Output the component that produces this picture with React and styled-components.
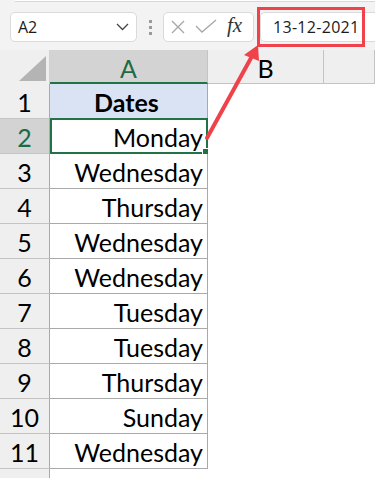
import React from 'react';
import styled, { createGlobalStyle } from 'styled-components';

const GlobalStyle = createGlobalStyle`
  html, body {
    margin: 0;
    padding: 0;
    background: #ffffff;
  }
  body {
    width: 375px;
    height: 478px;
    overflow: hidden;
    font-family: 'Open Sans', 'Noto Sans', sans-serif;
  }
`;

const rows = [
  'Monday',
  'Wednesday',
  'Thursday',
  'Wednesday',
  'Wednesday',
  'Tuesday',
  'Tuesday',
  'Thursday',
  'Sunday',
  'Wednesday',
];

const Page = styled.div`
  position: relative;
  width: 375px;
  height: 478px;
  overflow: hidden;
  background: #ffffff;
`;

const Toolbar = styled.div`
  height: 50px;
  background: #f3f3f3;
  box-sizing: border-box;
  padding: 12px 0 8px 10px;
  display: flex;
  align-items: stretch;
`;

const RibbonEdge = styled.div`
  position: absolute;
  top: 0;
  left: 15px;
  right: 0;
  height: 1px;
  border-bottom: 1px solid #d9d9d9;
  background: #ffffff;
`;

const NameBox = styled.div`
  width: 127px;
  box-sizing: border-box;
  background: #ffffff;
  border: 1px solid #dadada;
  border-radius: 5px;
  display: flex;
  align-items: center;
  justify-content: space-between;
  padding: 0 7px 0 7px;
  font-size: 16px;
  color: #1b1b1b;
`;

const Dots = styled.div`
  width: 26px;
  display: flex;
  flex-direction: column;
  align-items: center;
  justify-content: center;
  gap: 3px;

  span {
    width: 3px;
    height: 3px;
    background: #9a9a9a;
  }
`;

const FormulaButtons = styled.div`
  width: 91px;
  box-sizing: border-box;
  background: #ffffff;
  border: 1px solid #dadada;
  border-radius: 5px;
  display: flex;
  align-items: center;
  padding: 0 5px 0 6px;
  gap: 9px;
  margin-right: 6px;
`;

const Fx = styled.span`
  font-family: 'Liberation Serif', serif;
  font-style: italic;
  font-size: 21px;
  color: #333333;
  margin-left: 1px;
  margin-top: -3px;
`;

const FormulaInput = styled.div`
  flex: 1;
  background: #ffffff;
  border: 1px solid #dadada;
  border-right: none;
  border-radius: 5px 0 0 5px;
  display: flex;
  align-items: center;
  padding-left: 12px;
  font-size: 16px;
  color: #1b1b1b;
  letter-spacing: 0.3px;
`;

const HeaderRow = styled.div`
  display: flex;
  height: 34px;
  background: #efefef;
`;

const Corner = styled.div`
  width: 50px;
  box-sizing: border-box;
  border-right: 1px solid #d0d0d0;
  display: flex;
  align-items: flex-end;
  justify-content: flex-end;
  padding: 0 3px 3px 0;
`;

const ColHead = styled.div`
  width: ${p => (p.$w ? `${p.$w}px` : 'auto')};
  flex: ${p => (p.$w ? 'none' : 1)};
  box-sizing: border-box;
  background: ${p => (p.$active ? '#d3d3d3' : '#efefef')};
  border-right: 1px solid #c4c4c4;
  border-bottom: ${p => (p.$active ? '2px solid #217346' : '1px solid #c4c4c4')};
  display: flex;
  align-items: center;
  justify-content: center;
  font-family: 'Lato', sans-serif;
  font-size: 25px;
  color: ${p => (p.$active ? '#1e6b41' : '#000000')};
  padding-top: 3px;
`;

const Row = styled.div`
  display: flex;
  height: 35px;
`;

const RowHead = styled.div`
  width: 50px;
  box-sizing: border-box;
  background: ${p => (p.$active ? '#d3d3d3' : '#efefef')};
  border-right: 1px solid #a9a9a9;
  border-bottom: 1px solid #c4c4c4;
  display: flex;
  align-items: center;
  justify-content: center;
  font-family: 'Lato', sans-serif;
  font-size: 25px;
  color: ${p => (p.$active ? '#1e6b41' : '#000000')};
  padding-top: 2px;
`;

const Cell = styled.div`
  position: relative;
  width: 158px;
  box-sizing: border-box;
  background: ${p => (p.$header ? '#dae3f3' : '#ffffff')};
  border-right: 1px solid #a9a9a9;
  border-bottom: 1px solid #a9a9a9;
  display: flex;
  align-items: center;
  justify-content: ${p => (p.$header ? 'center' : 'flex-end')};
  padding: 2px 4px 0 0;
  font-family: 'Lato', sans-serif;
  font-size: 25px;
  font-weight: ${p => (p.$header ? 700 : 400)};
  color: #000000;
`;

const Selection = styled.div`
  position: absolute;
  left: 0;
  top: -1px;
  right: -1px;
  bottom: -1px;
  border: 2px solid #217346;
  pointer-events: none;
`;

const FillHandle = styled.div`
  position: absolute;
  right: -3px;
  bottom: -3px;
  width: 5px;
  height: 5px;
  background: #217346;
  border: 1px solid #ffffff;
`;

const Filler = styled.div`
  display: flex;
  height: 10px;
`;

const Overlay = styled.svg`
  position: absolute;
  left: 0;
  top: 0;
  pointer-events: none;
`;

export default function App() {
  return (
    <Page>
      <GlobalStyle />
      <RibbonEdge />
      <Toolbar>
        <NameBox>
          <span>A2</span>
          <svg width="13" height="8" viewBox="0 0 13 8">
            <polyline points="1,1 6.5,6.5 12,1" fill="none" stroke="#444" strokeWidth="1.3" />
          </svg>
        </NameBox>
        <Dots>
          <span />
          <span />
          <span />
        </Dots>
        <FormulaButtons>
          <svg width="16" height="16" viewBox="0 0 16 16">
            <path d="M2 2 L14 14 M14 2 L2 14" stroke="#a6a6a6" strokeWidth="1.3" fill="none" />
          </svg>
          <svg width="22" height="16" viewBox="0 0 22 16">
            <polyline points="1,7 7,13 21,1" stroke="#a6a6a6" strokeWidth="1.3" fill="none" />
          </svg>
          <Fx>fx</Fx>
        </FormulaButtons>
        <FormulaInput>13-12-2021</FormulaInput>
      </Toolbar>

      <HeaderRow>
        <Corner>
          <svg width="27" height="25" viewBox="0 0 27 25">
            <polygon points="27,0 27,25 0,25" fill="#b4b4b4" />
          </svg>
        </Corner>
        <ColHead $w={158} $active>A</ColHead>
        <ColHead $w={116}>B</ColHead>
        <ColHead />
      </HeaderRow>

      <Row>
        <RowHead>1</RowHead>
        <Cell $header>Dates</Cell>
      </Row>
      {rows.map((text, i) => (
        <Row key={i}>
          <RowHead $active={i === 0}>{i + 2}</RowHead>
          <Cell>
            {text}
            {i === 0 && (
              <Selection>
                <FillHandle />
              </Selection>
            )}
          </Cell>
        </Row>
      ))}
      <Filler>
        <RowHead />
      </Filler>

      <Overlay width="375" height="478" viewBox="0 0 375 478">
        <rect x="258.5" y="8.5" width="105" height="37" fill="none" stroke="#f0424a" strokeWidth="3" />
        <line x1="207" y1="138" x2="251" y2="58" stroke="#f0424a" strokeWidth="4" strokeLinecap="round" />
        <polygon points="258,45 244,55 259,61" fill="#f0424a" />
      </Overlay>
    </Page>
  );
}
